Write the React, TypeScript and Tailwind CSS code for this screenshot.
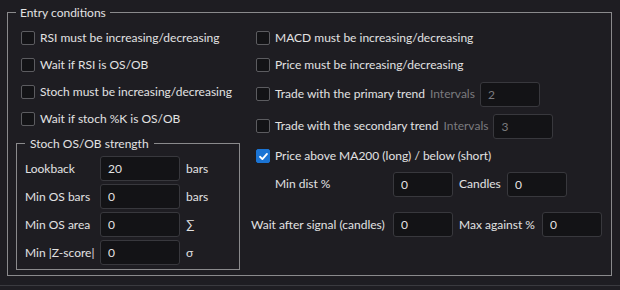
import React, { useState } from 'react';

function Box({ checked, onChange }: { checked: boolean; onChange: () => void }) {
  return (
    <button
      onClick={onChange}
      className={
        checked
          ? 'w-[14px] h-[14px] rounded-[2px] bg-[#1b74d4] border border-[#1b74d4] flex items-center justify-center shrink-0'
          : 'w-[14px] h-[14px] rounded-[2px] bg-[#131316] border border-[#5c5c60] shrink-0'
      }
    >
      {checked && (
        <svg viewBox="0 0 12 12" className="w-[11px] h-[11px]">
          <path d="M2.2 6.3 L4.8 8.8 L9.8 3.2" fill="none" stroke="white" strokeWidth="2" strokeLinecap="round" strokeLinejoin="round" />
        </svg>
      )}
    </button>
  );
}

function Check({ label, checked, onChange }: { label: string; checked: boolean; onChange: () => void }) {
  return (
    <label className="flex items-center gap-[5px] cursor-pointer whitespace-nowrap">
      <Box checked={checked} onChange={onChange} />
      <span>{label}</span>
    </label>
  );
}

function Field({ value, w = 'w-[80px]', dim = false }: { value: string; w?: string; dim?: boolean }) {
  return (
    <input
      defaultValue={value}
      disabled={dim}
      className={`${w} h-[25px] bg-[#131316] border border-[#38383d] rounded-[3px] pl-[7px] outline-none ${dim ? 'text-[#7b7b7f]' : 'text-[#e2e2e2]'}`}
    />
  );
}

export default function App() {
  const [checks, setChecks] = useState<Record<string, boolean>>({
    rsi: false,
    waitRsi: false,
    stoch: false,
    waitStoch: false,
    macd: false,
    price: false,
    primary: false,
    secondary: false,
    ma200: true,
  });
  const toggle = (k: string) => setChecks({ ...checks, [k]: !checks[k] });

  const strength = [
    { label: 'Lookback', value: '20', unit: 'bars' },
    { label: 'Min OS bars', value: '0', unit: 'bars' },
    { label: 'Min OS area', value: '0', unit: '∑' },
    { label: 'Min |Z-score|', value: '0', unit: 'σ' },
  ];

  return (
    <div className="w-[620px] h-[290px] bg-[#1e1d22] text-[#e2e2e2] text-[12px] font-['Lato',sans-serif] whitespace-nowrap flex flex-col">
      <div className="h-[285px] pt-[4px] px-[7px]">
        <fieldset className="border border-[#8a8a8c] h-[272px] w-[604px] pl-[8px] pr-[9px]">
          <legend className="px-[4px] leading-[17px]">Entry conditions</legend>
          <div className="flex pt-[3px]">
            {/* left column */}
            <div className="w-[224px] flex flex-col">
              <div className="h-[27px] flex items-center pl-[5px]">
                <Check label="RSI must be increasing/decreasing" checked={checks.rsi} onChange={() => toggle('rsi')} />
              </div>
              <div className="h-[27px] flex items-center pl-[5px]">
                <Check label="Wait if RSI is OS/OB" checked={checks.waitRsi} onChange={() => toggle('waitRsi')} />
              </div>
              <div className="h-[27px] flex items-center pl-[5px]">
                <Check label="Stoch must be increasing/decreasing" checked={checks.stoch} onChange={() => toggle('stoch')} />
              </div>
              <div className="h-[27px] flex items-center pl-[5px]">
                <Check label="Wait if stoch %K is OS/OB" checked={checks.waitStoch} onChange={() => toggle('waitStoch')} />
              </div>
              <fieldset className="mt-[3px] border border-[#8a8a8c] h-[135px] px-[8px]">
                <legend className="px-[5px] leading-[17px]">Stoch OS/OB strength</legend>
                <div className="flex flex-col gap-[3px] pt-[4px]">
                  {strength.map((r) => (
                    <div key={r.label} className="flex items-center h-[25px]">
                      <span className="w-[75px]">{r.label}</span>
                      <Field value={r.value} />
                      <span className="ml-[6px]">{r.unit}</span>
                    </div>
                  ))}
                </div>
              </fieldset>
            </div>

            {/* right column */}
            <div className="ml-[11px] flex flex-col">
              <div className="h-[27px] flex items-center pl-[5px]">
                <Check label="MACD must be increasing/decreasing" checked={checks.macd} onChange={() => toggle('macd')} />
              </div>
              <div className="h-[27px] flex items-center pl-[5px]">
                <Check label="Price must be increasing/decreasing" checked={checks.price} onChange={() => toggle('price')} />
              </div>
              <div className="h-[32px] flex items-center pl-[5px]">
                <Check label="Trade with the primary trend" checked={checks.primary} onChange={() => toggle('primary')} />
                <span className="ml-[5px] text-[#7b7b7f]">Intervals</span>
                <span className="ml-[5px]">
                  <Field value="2" w="w-[60px]" dim />
                </span>
              </div>
              <div className="h-[32px] flex items-center pl-[5px]">
                <Check label="Trade with the secondary trend" checked={checks.secondary} onChange={() => toggle('secondary')} />
                <span className="ml-[5px] text-[#7b7b7f]">Intervals</span>
                <span className="ml-[5px]">
                  <Field value="3" w="w-[60px]" dim />
                </span>
              </div>
              <div className="h-[28px] flex items-center pl-[5px]">
                <Check label="Price above MA200 (long) / below (short)" checked={checks.ma200} onChange={() => toggle('ma200')} />
              </div>
              <div className="h-[28px] flex items-center">
                <span className="w-[142px] pl-[24px]">Min dist %</span>
                <Field value="0" w="w-[60px]" />
                <span className="ml-[6px] w-[48px]">Candles</span>
                <Field value="0" w="w-[60px]" />
              </div>
              <div className="mt-[14px] h-[25px] flex items-center">
                <span className="w-[142px]">Wait after signal (candles)</span>
                <Field value="0" w="w-[60px]" />
                <span className="ml-[6px] w-[83px]">Max against %</span>
                <Field value="0" w="w-[60px]" />
              </div>
            </div>
          </div>
        </fieldset>
      </div>
      <div className="border-t border-[#3a3a3f] flex-1 bg-[#1f1e23]" />
    </div>
  );
}
